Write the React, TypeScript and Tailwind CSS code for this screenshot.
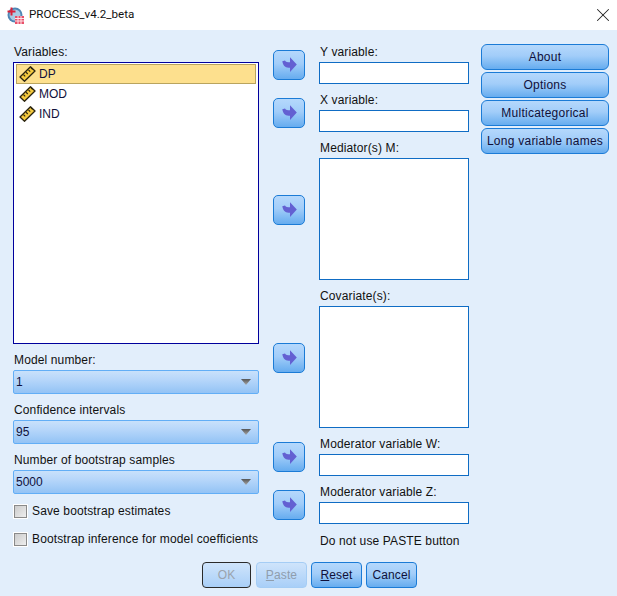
import { X } from 'lucide-react';

const font = "font-['Liberation_Sans',Arial,sans-serif]";
const buttonFace =
  'border border-[#1b7bd6] rounded-[4px] bg-[linear-gradient(to_bottom,#b5d8fc_0%,#a2cdf9_45%,#66acef_100%)] text-[#10103a]';

function AppIcon() {
  return (
    <svg width="17" height="17" viewBox="0 0 17 17" className="shrink-0">
      <circle cx="8" cy="8" r="7.5" fill="#4f86b5" />
      <circle cx="8" cy="8" r="5.5" fill="#a9cbe4" />
      <path d="M0.5 4.5h8M4.5 0.5v8" stroke="#d8213a" strokeWidth="2" />
      <rect x="8" y="9" width="9" height="8" fill="#e8506a" />
      <path d="M8 11.5h9M8 14h9M11 9v8M14 9v8" stroke="#fde3e8" strokeWidth="1" />
    </svg>
  );
}

function RulerIcon() {
  return (
    <svg width="17" height="16" viewBox="0 0 17 16" className="shrink-0">
      <path d="M1 11 11.5 0.8 16 5 5.5 15.2Z" fill="#f3c93f" stroke="#2b2410" strokeWidth="1.3" strokeLinejoin="round" />
      <path d="M4.5 8.6 6.2 10.4M7 6.2 8.7 8M9.5 3.8 11.2 5.6M12 1.8 13.6 3.4" stroke="#2b2410" strokeWidth="1.2" />
    </svg>
  );
}

function ArrowButton({ className }: { className?: string }) {
  return (
    <div className={`w-[32px] h-[30px] flex items-center justify-center ${buttonFace} rounded-[5px] ${className ?? ''}`}>
      <svg width="15" height="16" viewBox="0 0 15 16">
        <path d="M0.3 4.2 3 3.6C3.8 5.2 5.5 5.3 8 5.3V0.3L14.8 7.6 8 15V10.8C4 10.8 1.2 9.6 0.3 4.2Z" fill="#6360d2" />
      </svg>
    </div>
  );
}

function Combo({ value }: { value: string }) {
  return (
    <div className="h-[24px] w-[246px] flex items-center justify-between pl-[2px] pr-[7px] rounded-[2px] border border-[#62aef6] bg-[linear-gradient(to_bottom,#c9e1fb_0%,#b6d6fa_40%,#93c3f5_100%)] text-[12px] text-[#10103a]">
      <span>{value}</span>
      <svg width="10" height="6" viewBox="0 0 10 6">
        <defs>
          <linearGradient id="comboArrow" x1="0" y1="0" x2="0" y2="1">
            <stop offset="0" stopColor="#555555" />
            <stop offset="1" stopColor="#a8a8a8" />
          </linearGradient>
        </defs>
        <path d="M0 0H10L5 6Z" fill="url(#comboArrow)" />
      </svg>
    </div>
  );
}

function Label({ children, className }: { children: string; className?: string }) {
  return <div className={`h-[14px] leading-[14px] text-[12px] tracking-[0.13px] text-[#111] whitespace-nowrap ${className ?? ''}`}>{children}</div>;
}

function Check({ label, className }: { label: string; className?: string }) {
  return (
    <div className={`flex items-center h-[13px] ml-[1px] ${className ?? ''}`}>
      <div className="w-[13px] h-[13px] border border-[#8a8a8a] bg-[linear-gradient(135deg,#cccccc,#eeeeee)] outline outline-1 outline-white shrink-0" />
      <span className="ml-[5px] text-[12px] tracking-[0.13px] leading-[13px] text-[#111] whitespace-nowrap">{label}</span>
    </div>
  );
}

function SideButton({ label }: { label: string }) {
  return (
    <div className={`h-[26px] flex items-center justify-center text-[12px] tracking-[0.25px] rounded-[6px] ${buttonFace}`}>{label}</div>
  );
}

export default function App() {
  const variables = ['DP', 'MOD', 'IND'];

  return (
    <div className={`w-[617px] h-[596px] overflow-hidden ${font}`}>
      {/* Title bar */}
      <div className="h-[30px] bg-white flex items-center pl-[7px] pr-[3px]">
        <AppIcon />
        <span className="ml-[5px] text-[11.6px] text-[#111] font-['Roboto',sans-serif]">PROCESS_v4.2_beta</span>
        <X className="ml-auto text-[#222]" size={22} strokeWidth={1.1} />
      </div>

      <div className="h-[566px] bg-[#e2eefb]">
        <div className="h-[532px] flex pt-[14px] pl-[13px]">
          {/* Left column */}
          <div className="w-[246px]">
            <Label className="mt-[1px] mb-[3px] ml-[1px]">Variables:</Label>
            <div className="h-[282px] border border-[#00009c] bg-white px-[2px] pt-[1px]">
              {variables.map((name, i) => (
                <div
                  key={name}
                  className={`h-[20px] w-[240px] flex items-center pl-[2px] border text-[12px] text-[#10103a] ${i === 0 ? 'bg-[#fde08e] border-[#b9a45e]' : 'border-transparent'}`}
                >
                  <RulerIcon />
                  <span className="ml-[3px]">{name}</span>
                </div>
              ))}
            </div>
            <Label className="mt-[9px] mb-[3px] ml-[1px]">Model number:</Label>
            <Combo value="1" />
            <Label className="mt-[9px] mb-[3px] ml-[1px]">Confidence intervals</Label>
            <Combo value="95" />
            <Label className="mt-[9px] mb-[3px] ml-[1px]">Number of bootstrap samples</Label>
            <Combo value="5000" />
            <Check className="mt-[11px]" label="Save bootstrap estimates" />
            <Check className="mt-[15px]" label="Bootstrap inference for model coefficients" />
          </div>

          {/* Arrow buttons */}
          <div className="w-[32px] ml-[14px] pt-[6px]">
            <ArrowButton />
            <ArrowButton className="mt-[18px]" />
            <ArrowButton className="mt-[67px]" />
            <ArrowButton className="mt-[118px]" />
            <ArrowButton className="mt-[69px]" />
            <ArrowButton className="mt-[18px]" />
          </div>

          {/* Target fields */}
          <div className="w-[150px] ml-[14px]">
            <Label className="mt-[1px] mb-[3px] ml-[1px]">Y variable:</Label>
            <div className="h-[22px] border border-[#0f6cc4] bg-white" />
            <Label className="mt-[9px] mb-[3px] ml-[1px]">X variable:</Label>
            <div className="h-[22px] border border-[#0f6cc4] bg-white" />
            <Label className="mt-[9px] mb-[3px] ml-[1px]">Mediator(s) M:</Label>
            <div className="h-[122px] border border-[#0f6cc4] bg-white" />
            <Label className="mt-[9px] mb-[3px] ml-[1px]">Covariate(s):</Label>
            <div className="h-[122px] border border-[#0f6cc4] bg-white" />
            <Label className="mt-[9px] mb-[3px] ml-[1px]">Moderator variable W:</Label>
            <div className="h-[22px] border border-[#0f6cc4] bg-white" />
            <Label className="mt-[9px] mb-[3px] ml-[1px]">Moderator variable Z:</Label>
            <div className="h-[22px] border border-[#0f6cc4] bg-white" />
            <Label className="mt-[10px] ml-[1px]">Do not use PASTE button</Label>
          </div>

          {/* Side buttons */}
          <div className="w-[128px] ml-[12px] flex flex-col gap-[2px]">
            <SideButton label="About" />
            <SideButton label="Options" />
            <SideButton label="Multicategorical" />
            <SideButton label="Long variable names" />
          </div>
        </div>

        {/* Bottom buttons */}
        <div className="flex pl-[202px] text-[12px] tracking-[0.13px]">
          <div className="w-[49px] h-[26px] flex items-center justify-center rounded-[4px] border border-[#2a2a2a] bg-[linear-gradient(to_bottom,#cfe4fb,#a9cff8)] text-[#9aa3ad]">
            OK
          </div>
          <div className="w-[51px] h-[26px] ml-[5px] flex items-center justify-center rounded-[4px] border border-[#a5cdf5] bg-[linear-gradient(to_bottom,#cfe4fb,#a9cff8)] text-[#8f9dad]">
            <span><span className="underline">P</span>aste</span>
          </div>
          <div className={`w-[51px] h-[26px] ml-[4px] flex items-center justify-center ${buttonFace}`}>
            <span><span className="underline">R</span>eset</span>
          </div>
          <div className={`w-[51px] h-[26px] ml-[4px] flex items-center justify-center ${buttonFace}`}>Cancel</div>
        </div>
      </div>
    </div>
  );
}
